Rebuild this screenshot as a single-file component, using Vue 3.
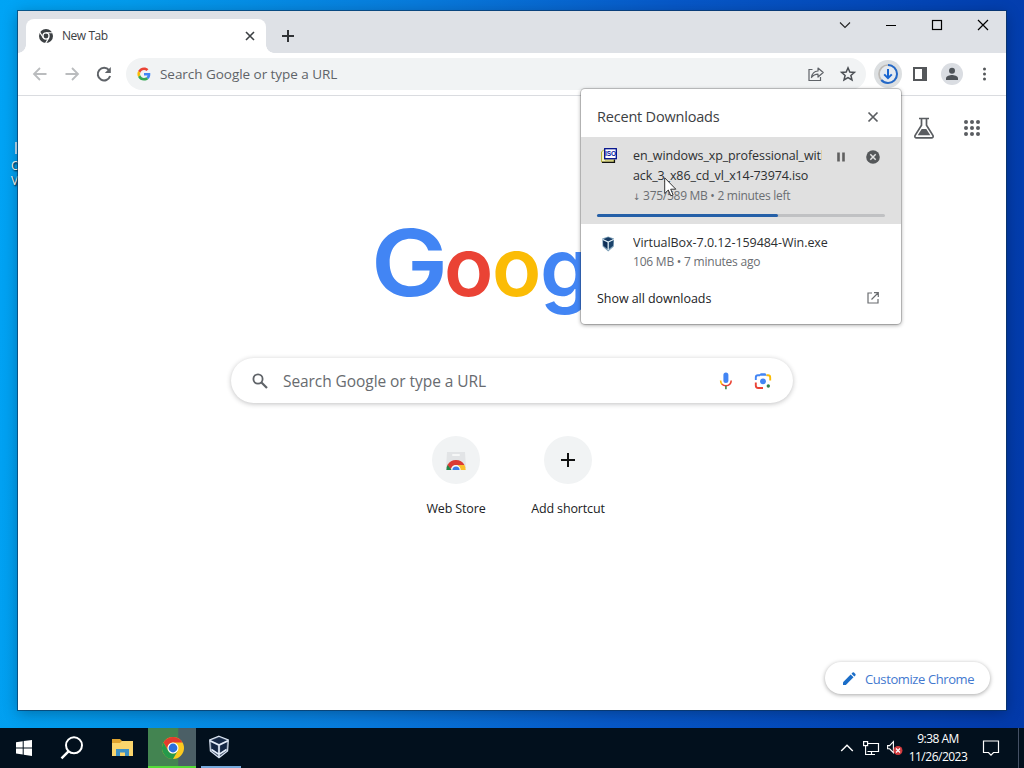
<template>
  <div class="desktop">
    <div class="wallpaper">
      <div class="desktop-icon">
        <span class="icon-edge"></span>
        <span>O</span>
        <span>V</span>
      </div>

      <div class="window">
        <!-- Tab strip -->
        <header class="titlebar">
          <div class="tab">
            <svg class="tab-favicon" width="16" height="16" viewBox="0 0 16 16">
              <circle cx="8" cy="8" r="7" fill="#3c4043" />
              <circle cx="8" cy="8" r="3.7" fill="#fff" />
              <circle cx="8" cy="8" r="2.4" fill="#3c4043" />
              <path d="M8 4.7H15M5.2 9.7L1.6 3.9M10.9 9.6L7.4 15.6" stroke="#fff" stroke-width="1.1" />
            </svg>
            <span class="tab-title">New Tab</span>
            <svg class="tab-close" width="16" height="16" viewBox="0 0 16 16">
              <path d="M4 4L12 12M12 4L4 12" stroke="#3c4043" stroke-width="1.6" />
            </svg>
          </div>
          <svg class="new-tab" width="16" height="16" viewBox="0 0 16 16">
            <path d="M8 2V14M2 8H14" stroke="#303336" stroke-width="2" />
          </svg>
          <div class="caption-buttons">
            <svg width="46" height="28" viewBox="0 0 46 28"><path d="M18 11.5L23 16.5L28 11.5" fill="none" stroke="#222" stroke-width="1.1" /></svg>
            <svg width="46" height="28" viewBox="0 0 46 28"><path d="M18 14.5H28" stroke="#000" /></svg>
            <svg width="46" height="28" viewBox="0 0 46 28"><rect x="18.5" y="9.5" width="9" height="9" fill="none" stroke="#000" stroke-width="1.2" /></svg>
            <svg width="46" height="28" viewBox="0 0 46 28"><path d="M18 9L28 19M28 9L18 19" stroke="#000" stroke-width="1.2" /></svg>
          </div>
        </header>

        <!-- Toolbar -->
        <div class="toolbar">
          <svg class="tool" width="32" height="32" viewBox="0 0 32 32"><path d="M22.5 16H10.5M16 10L10 16L16 22" fill="none" stroke="#babcbe" stroke-width="1.8" /></svg>
          <svg class="tool" width="32" height="32" viewBox="0 0 32 32"><path d="M9.5 16H21.5M16 10L22 16L16 22" fill="none" stroke="#babcbe" stroke-width="1.8" /></svg>
          <svg class="tool" width="32" height="32" viewBox="0 0 32 32">
            <path d="M21 12.2A6.3 6.3 0 1 0 22.1 18" fill="none" stroke="#5f6368" stroke-width="2" />
            <path d="M22.8 9V15H16.8Z" fill="#5f6368" />
          </svg>
          <div class="omnibox">
            <svg width="14" height="14" viewBox="-1.5 -1.5 51 51">
              <path fill="#EA4335" d="M24 9.5c3.54 0 6.71 1.22 9.21 3.6l6.85-6.85C35.9 2.38 30.47 0 24 0 14.62 0 6.51 5.38 2.56 13.22l7.98 6.19C12.43 13.72 17.74 9.5 24 9.5z" />
              <path fill="#4285F4" d="M46.98 24.55c0-1.57-.15-3.09-.38-4.55H24v9.02h12.94c-.58 2.96-2.26 5.48-4.78 7.18l7.73 6c4.51-4.18 7.09-10.36 7.09-17.65z" />
              <path fill="#FBBC05" d="M10.53 28.59c-.48-1.45-.76-2.99-.76-4.59s.27-3.14.76-4.59l-7.98-6.19C.92 16.46 0 20.12 0 24c0 3.88.92 7.54 2.56 10.78l7.97-6.19z" />
              <path fill="#34A853" d="M24 48c6.48 0 11.93-2.13 15.89-5.81l-7.73-6c-2.15 1.45-4.92 2.3-8.16 2.3-6.26 0-11.57-4.22-13.47-9.91l-7.98 6.19C6.51 42.62 14.62 48 24 48z" />
            </svg>
            <span class="omnibox-text">Search Google or type a URL</span>
            <svg width="32" height="32" viewBox="0 0 32 32">
              <path d="M12.5 11.5H9V22.5H20.5V19" fill="none" stroke="#5f6368" stroke-width="1.2" />
              <path d="M11.5 19.5C12 15.5 14.3 13.2 18 13V10L23.2 14.5L18 19V16.2C15.3 16.2 13.2 17.2 11.5 19.5Z" fill="none" stroke="#5f6368" stroke-width="1.2" stroke-linejoin="round" />
            </svg>
            <svg width="32" height="32" viewBox="0 0 32 32">
              <path d="M16 9.8L17.8 14L22.4 14.4L18.9 17.4L20 21.9L16 19.5L12 21.9L13.1 17.4L9.6 14.4L14.2 14Z" fill="none" stroke="#4b4f54" stroke-width="1.5" />
            </svg>
          </div>
          <svg class="tool" width="32" height="32" viewBox="0 0 32 32">
            <circle cx="16" cy="16" r="14" fill="#dcdfe1" />
            <circle cx="16" cy="16" r="9" fill="#e5eaf0" stroke="#bcb9b5" stroke-width="1.7" />
            <circle cx="16" cy="16" r="9" fill="none" stroke="#2368c8" stroke-width="2" stroke-dasharray="35.6 60" transform="rotate(-90 16 16)" />
            <path d="M16 11V20M12.2 16.4L16 20.2L19.8 16.4" fill="none" stroke="#1a66d0" stroke-width="2" />
          </svg>
          <svg class="tool" width="32" height="32" viewBox="0 0 32 32">
            <rect x="10" y="10" width="12" height="12" fill="none" stroke="#54575a" stroke-width="2" />
            <rect x="18" y="10" width="4" height="12" fill="#54575a" />
          </svg>
          <svg class="tool" width="32" height="32" viewBox="0 0 32 32">
            <circle cx="16" cy="16" r="11" fill="#dadde2" />
            <circle cx="16" cy="12.8" r="3" fill="#4e5358" />
            <path d="M10 22V20.3C10 17.8 14 17 16 17S22 17.8 22 20.3V22Z" fill="#4e5358" />
          </svg>
          <svg class="tool" width="32" height="32" viewBox="0 0 32 32">
            <circle v-for="y in [11, 16, 21]" :key="y" cx="16.5" :cy="y" r="1.5" fill="#54575a" />
          </svg>
        </div>

        <!-- New tab page -->
        <main class="page">
          <div class="page-links">
            <svg width="24" height="24" viewBox="0 0 24 24">
              <path d="M7 2.5H17M9.5 3V9.3L3 19.5C2.5 21 3.2 21.8 4.5 21.8H19.5C20.8 21.8 21.5 21 21 19.5L14.5 9.3V3" fill="none" stroke="#5a5d61" stroke-width="1.7" />
              <path d="M9.7 13H14.3L18.3 19.3H5.7Z" fill="#5a5d61" />
            </svg>
            <svg width="24" height="24" viewBox="0 0 24 24">
              <circle v-for="n in 9" :key="n" :cx="6 + ((n - 1) % 3) * 6" :cy="6 + Math.floor((n - 1) / 3) * 6" r="2" fill="#5a5d61" />
            </svg>
          </div>

          <svg class="logo" width="272" height="92" viewBox="0 0 272 92">
            <text v-for="(l, i) in logo" :key="i" class="logo-letter" :fill="l.color" :font-size="l.size" :transform="`translate(${l.x} ${l.y}) scale(${l.sx} 1)`">{{ l.ch }}</text>
          </svg>

          <div class="searchbox">
            <svg width="16" height="16" viewBox="0 0 16 16">
              <circle cx="6" cy="6" r="4.6" fill="none" stroke="#5f6368" stroke-width="1.8" />
              <path d="M9.5 9.5L15 15" stroke="#5f6368" stroke-width="2.2" />
            </svg>
            <span class="searchbox-text">Search Google or type a URL</span>
            <svg class="mic" width="20" height="20" viewBox="0 0 20 20">
              <rect x="7.4" y="1.5" width="5" height="10.5" rx="2.5" fill="#4285f4" />
              <path d="M4.6 9.5C4.6 11.3 5.2 12.5 6.2 13.5" fill="none" stroke="#fbbc04" stroke-width="1.6" />
              <path d="M6 13.3C8 15.3 12 15.3 13.8 13.3C14.7 12.3 15.2 11 15.2 9.5" fill="none" stroke="#ea4335" stroke-width="1.6" />
              <path d="M9.9 14.8V18.3" stroke="#4d8b50" stroke-width="1.7" />
            </svg>
            <svg width="20" height="20" viewBox="0 0 20 20">
              <path d="M2.8 9V6.5Q2.8 4.2 5 4.2H7" fill="none" stroke="#4285f4" stroke-width="1.9" />
              <path d="M6 4.8L7.6 2.2H12.4L14 4.8Z" fill="#4285f4" />
              <path d="M13.5 4.2H15Q17.2 4.2 17.2 6.5V9.5" fill="none" stroke="#fbbc04" stroke-width="1.9" />
              <path d="M2.8 11.5V14.5Q2.8 17 5.2 17H10" fill="none" stroke="#ea4335" stroke-width="1.9" />
              <circle cx="10" cy="10.3" r="2.9" fill="#4285f4" />
              <circle cx="15.3" cy="15" r="1.7" fill="#34804a" />
            </svg>
          </div>

          <div class="shortcuts">
            <div class="shortcut">
              <div class="shortcut-icon">
                <svg width="24" height="24" viewBox="0 0 24 24">
                  <path d="M3 4H21L22 20H2Z" fill="#e2e4e6" />
                  <rect x="8" y="6" width="8" height="2" rx="1" fill="#f6f7f7" />
                  <path d="M2.3 22A9.7 9.7 0 0 1 3.8 16.5L8 22Z" fill="#24864a" />
                  <path d="M3.5 17A9.8 9.8 0 0 1 20.5 17H12A5 5 0 0 0 7 21Z" fill="#db3b34" />
                  <path d="M12 17H20.5A9.7 9.7 0 0 1 21.7 22H16A5 5 0 0 0 12 17Z" fill="#fbc02d" />
                  <path d="M7.3 22A4.7 4.7 0 0 1 16.7 22Z" fill="#fff" />
                  <path d="M8.4 22A3.6 3.6 0 0 1 15.6 22Z" fill="#3b7de8" />
                </svg>
              </div>
              <span>Web Store</span>
            </div>
            <div class="shortcut">
              <div class="shortcut-icon">
                <svg width="24" height="24" viewBox="0 0 24 24"><path d="M12 5V19M5 12H19" stroke="#111" stroke-width="2" /></svg>
              </div>
              <span>Add shortcut</span>
            </div>
          </div>

          <button class="customize">
            <svg width="16" height="16" viewBox="0 0 16 16">
              <path d="M2 11.2L9.7 3.5L12.5 6.3L4.8 14H2Z" fill="#1a6dc8" />
              <path d="M10.5 2.7L11.6 1.6Q12.3 1 13 1.6L14.4 3Q15 3.7 14.4 4.4L13.3 5.5Z" fill="#1a6dc8" />
            </svg>
            <span>Customize Chrome</span>
          </button>
        </main>

        <!-- Download bubble -->
        <section class="downloads">
          <div class="downloads-header">
            <span class="downloads-title">Recent Downloads</span>
            <svg width="16" height="16" viewBox="0 0 16 16"><path d="M3.5 3.5L12.5 12.5M12.5 3.5L3.5 12.5" stroke="#5a5d61" stroke-width="1.7" /></svg>
          </div>

          <div class="download active">
            <div class="download-row">
              <svg class="file-icon iso-file" width="18" height="16" viewBox="0 0 18 16">
                <path d="M1.5 14V4L3.5 2H5V12H14V14Z" fill="#f3f0c4" stroke="#b5b13a" />
                <path d="M2 14.3H14.5V11.5" fill="none" stroke="#111" stroke-width="1.2" />
                <rect x="4.7" y="0.7" width="11.6" height="10" fill="#fff" stroke="#00108c" stroke-width="1.3" />
                <text x="10.5" y="8" class="iso-label">ISO</text>
              </svg>
              <div class="download-info">
                <div class="file-name iso-first">en_windows_xp_professional_with</div>
                <div class="file-name iso-second">ack_3_x86_cd_vl_x14-73974.iso</div>
                <div class="file-status"><span class="down">↓</span> 375/589 MB • 2 minutes left</div>
              </div>
              <svg class="pause" width="16" height="16" viewBox="0 0 16 16"><path d="M5.5 3.5V12.5M10.5 3.5V12.5" stroke="#606060" stroke-width="2.6" /></svg>
              <svg class="cancel" width="16" height="16" viewBox="0 0 16 16">
                <circle cx="8" cy="8" r="6.8" fill="#55585a" />
                <path d="M5.3 5.3L10.7 10.7M10.7 5.3L5.3 10.7" stroke="#e3e3e3" stroke-width="1.5" />
              </svg>
            </div>
            <div class="progress"><div class="progress-fill" :style="{ width: progress + '%' }"></div></div>
          </div>

          <div class="download">
            <div class="download-row">
              <svg class="file-icon vbox-file" width="16" height="16" viewBox="0 0 16 16">
                <path d="M7.2 0.5L13 2.6L12.8 10.5L7.2 15.5L1.6 10.5L1.2 2.6Z" fill="#7d9fb7" />
                <path d="M7.2 1.2L12 3.2L7.2 5.6L2.3 3.2Z" fill="#173c64" />
                <path d="M2 4.2L6.6 6.5V13L2.3 9.8Z" fill="#0e2f57" />
                <path d="M12.4 4.2L7.8 6.5V13L12.1 9.8Z" fill="#1c436b" />
                <path d="M7.2 5.8V14M1.6 3.4L7.2 6L12.8 3.4" stroke="#e2eef5" fill="none" />
              </svg>
              <div class="download-info">
                <div class="file-name exe">VirtualBox-7.0.12-159484-Win.exe</div>
                <div class="file-status ago">106 MB • 7 minutes ago</div>
              </div>
            </div>
          </div>

          <div class="show-all">
            <span>Show all downloads</span>
            <svg width="16" height="16" viewBox="0 0 16 16">
              <path d="M7 3H3V13H13V9M9 2.7H13.3V7M13 3L6.5 9.5" fill="none" stroke="#6a6d70" stroke-width="1.2" />
            </svg>
          </div>

          <svg class="cursor" width="13" height="20" viewBox="0 0 13 20">
            <path d="M0.7 0.8V16.5L4.3 13L6.8 18.8L9.1 17.8L6.7 12.2H11.8Z" fill="#fff" stroke="#222" stroke-width="0.9" />
          </svg>
        </section>
      </div>
    </div>

    <!-- Taskbar -->
    <footer class="taskbar">
      <div class="task">
        <svg width="18" height="18" viewBox="0 0 18 18"><path d="M1 3.3L7.7 2.3V8.4H1ZM8.7 2.1L17 1V8.4H8.7ZM1 9.4H7.7V15.6L1 14.6ZM8.7 9.4H17V17L8.7 15.8Z" fill="#fff" /></svg>
      </div>
      <div class="task">
        <svg width="24" height="24" viewBox="0 0 24 24">
          <circle cx="14" cy="9.3" r="8" fill="none" stroke="#fff" stroke-width="2" />
          <path d="M8.5 15.3L1.5 22.3" stroke="#fff" stroke-width="2.4" />
        </svg>
      </div>
      <div class="task explorer">
        <svg width="24" height="20" viewBox="0 0 24 20">
          <path d="M1 1H9L11 3H22V18H1Z" fill="#dfa32f" />
          <path d="M1 5H9L11 3H22V18H1Z" fill="#fbd56c" />
          <path d="M5 18V11H18V18H14V14.5H9V18Z" fill="#3e91c5" />
        </svg>
      </div>
      <div class="task chrome">
        <svg width="24" height="24" viewBox="0 0 24 24">
          <circle cx="12" cy="12" r="11" fill="#fbc91f" />
          <path d="M2.47 6.5A11 11 0 0 1 21.53 6.5H12A5.5 5.5 0 0 0 7.2 14.7Z" fill="#e33b2e" />
          <path d="M2.47 6.5L7.2 14.7A5.5 5.5 0 0 0 16.8 14.8L12 23A11 11 0 0 1 2.47 6.5Z" fill="#25994b" />
          <circle cx="12" cy="12" r="5.5" fill="#fff" />
          <circle cx="12" cy="12" r="4.4" fill="#2c70dd" />
        </svg>
      </div>
      <div class="task vbox">
        <svg width="22" height="24" viewBox="0 0 22 24">
          <path d="M11 1.2L20.3 5L19.6 16L11 22.8L2.4 16L1.7 5Z" fill="#46566c" stroke="#dbe5f4" stroke-width="1.2" />
          <path d="M11 2.5L18.5 5.5L11 9L3.5 5.5Z" fill="#142744" />
          <path d="M3.1 7.3L9.7 10.5V18L3.8 13.8ZM18.9 7.3L12.3 10.5V18L18.2 13.8Z" fill="#142744" />
          <path d="M2 5.7L11 10L20 5.7M11 10V22M3.4 14.5L11 19.4L18.6 14.5" fill="none" stroke="#e4edfa" stroke-width="1.6" />
        </svg>
      </div>

      <div class="tray">
        <svg width="14" height="16" viewBox="0 0 14 16"><path d="M1.2 11L7 5.2L12.8 11" fill="none" stroke="#fff" stroke-width="1.4" /></svg>
        <svg class="network" width="18" height="16" viewBox="0 0 18 16">
          <path d="M5 3.5H16.5V11.5H5.5M9.5 11.5V14.5M6 14.5H13" fill="none" stroke="#fff" stroke-width="1.2" />
          <rect x="1.6" y="1.6" width="4" height="4" fill="#02101d" stroke="#fff" stroke-width="1.2" />
          <path d="M3.6 5.5V14.5H7" fill="none" stroke="#fff" stroke-width="1.1" />
        </svg>
        <svg class="volume" width="18" height="18" viewBox="0 0 18 18">
          <path d="M1.6 6.6H3.6L7.4 2.6V13.6L3.6 9.8H1.6Z" fill="none" stroke="#fff" stroke-width="1.1" />
          <circle cx="12" cy="11.5" r="4.5" fill="#d13a3d" />
          <path d="M10 9.5L14 13.5M14 9.5L10 13.5" stroke="#fff" stroke-width="1.2" />
        </svg>
        <div class="clock">
          <span class="time">9:38 AM</span>
          <span class="date">11/26/2023</span>
        </div>
        <svg class="notify" width="18" height="18" viewBox="0 0 18 18"><path d="M1.5 2H16.5V13.5H11.5L9 16.2L6.5 13.5H1.5Z" fill="none" stroke="#fff" stroke-width="1.2" /></svg>
        <span class="peek"></span>
      </div>
    </footer>
  </div>
</template>

<script setup>
import { ref } from 'vue'

const progress = ref(62.8)

const logo = [
  { ch: 'G', color: '#4285f4', size: 92, x: -5, y: 68, sx: 1.12 },
  { ch: 'o', color: '#ea4335', size: 81, x: 68, y: 68, sx: 1 },
  { ch: 'o', color: '#fbbc05', size: 81, x: 116, y: 68, sx: 1 },
  { ch: 'g', color: '#4285f4', size: 82, x: 164, y: 69, sx: 1 }
]
</script>

<style>
body {
  margin: 0;
  overflow: hidden;
}
</style>

<style scoped>
.desktop {
  display: flex;
  flex-direction: column;
  width: 1024px;
  height: 768px;
  overflow: hidden;
  font-family: "Open Sans", "Noto Sans", sans-serif;
  font-size: 12.5px;
  color: #202124;
}

svg {
  display: block;
  flex: none;
}

span,
.file-name,
.file-status {
  white-space: nowrap;
}

.wallpaper {
  position: relative;
  flex: 1;
  display: flex;
  box-sizing: border-box;
  padding: 11px 18px 18px;
  background: linear-gradient(95deg, #00a4f5 0%, #039bec 12%, #087bdc 38%, #0758c8 62%, #0345b6 85%, #0339a9 100%);
}

.desktop-icon {
  position: absolute;
  left: 11px;
  top: 114px;
  display: flex;
  flex-direction: column;
  width: 12px;
  font-size: 12px;
  line-height: 15px;
  color: #fff;
  text-shadow: 1px 1px 2px #000;
}

.icon-edge {
  width: 2px;
  height: 12px;
  margin: 28px 0 4px 4px;
  background: #b9dcf2;
}

.window {
  position: relative;
  flex: 1;
  display: flex;
  flex-direction: column;
  background: #fff;
  box-shadow: 0 0 0 1px rgba(10, 50, 90, 0.65), 0 3px 14px rgba(0, 0, 0, 0.3);
}

/* Tab strip */
.titlebar {
  display: flex;
  height: 42px;
  background: #dee1e6;
}

.tab {
  position: relative;
  display: flex;
  align-items: center;
  box-sizing: border-box;
  width: 240px;
  height: 34px;
  margin: 8px 0 0 8px;
  padding: 0 8px 0 12px;
  border-radius: 8px 8px 0 0;
  background: #fff;
}

.tab::before,
.tab::after {
  content: "";
  position: absolute;
  bottom: 0;
  width: 8px;
  height: 8px;
}

.tab::before {
  left: -8px;
  background: radial-gradient(circle at 0 0, transparent 7.5px, #fff 8px);
}

.tab::after {
  right: -8px;
  background: radial-gradient(circle at 100% 0, transparent 7.5px, #fff 8px);
}

.tab-title {
  flex: 1;
  margin: 0 0 2px 8px;
  font-size: 12px;
  letter-spacing: -0.45px;
  color: #3c4043;
}

.new-tab {
  margin: 17px 0 0 14px;
}

.caption-buttons {
  display: flex;
  margin-left: auto;
}

/* Toolbar */
.toolbar {
  display: flex;
  align-items: center;
  height: 42px;
  padding-left: 6px;
  border-bottom: 1px solid #dadce0;
}

.omnibox {
  display: flex;
  align-items: center;
  box-sizing: border-box;
  width: 740px;
  height: 32px;
  margin: 0 6px;
  padding: 0 2px 0 11px;
  border-radius: 16px;
  background: #f1f3f4;
}

.omnibox-text {
  flex: 1;
  margin-left: 9px;
  font-size: 13.5px;
  letter-spacing: -0.04px;
  color: #5f6368;
}

/* New tab page */
.page {
  flex: 1;
  display: flex;
  flex-direction: column;
  align-items: center;
}

.page-links {
  align-self: flex-end;
  display: flex;
  gap: 24px;
  margin: 20px 22px 0 0;
}

.logo {
  margin-top: 88px;
  overflow: visible;
}

.logo-letter {
  font-family: Inter, sans-serif;
  font-weight: 600;
}

.searchbox {
  display: flex;
  align-items: center;
  box-sizing: border-box;
  width: 562px;
  height: 45px;
  margin-top: 38px;
  padding: 0 20px 0 21px;
  border-radius: 23px;
  box-shadow: 0 1px 5px rgba(32, 33, 36, 0.28);
}

.searchbox-text {
  flex: 1;
  margin-left: 15px;
  font-size: 15.5px;
  letter-spacing: -0.07px;
  color: #686b6f;
}

.mic {
  margin-right: 17px;
}

.shortcuts {
  display: flex;
  margin-top: 33px;
}

.shortcut {
  display: flex;
  flex-direction: column;
  align-items: center;
  gap: 16px;
  width: 112px;
  line-height: 18px;
  letter-spacing: -0.15px;
}

.shortcut-icon {
  display: flex;
  align-items: center;
  justify-content: center;
  width: 48px;
  height: 48px;
  border-radius: 50%;
  background: #f1f3f4;
}

.customize {
  align-self: flex-end;
  display: flex;
  align-items: center;
  gap: 8px;
  box-sizing: border-box;
  width: 165px;
  height: 32px;
  margin: auto 16px 16px 0;
  padding: 1px 0 0 16px;
  border: 0;
  border-radius: 16px;
  background: #fff;
  box-shadow: 0 1px 4px rgba(0, 0, 0, 0.35);
  font: 13px "Open Sans", "Noto Sans", sans-serif;
  letter-spacing: -0.4px;
  color: #4379cf;
}

/* Download bubble */
.downloads {
  position: absolute;
  left: 563px;
  top: 78px;
  width: 320px;
  height: 235px;
  border-radius: 4px;
  background: #fff;
  box-shadow: 0 0 0 1px rgba(0, 0, 0, 0.16), 0 1px 4px rgba(0, 0, 0, 0.4);
}

.downloads-header {
  display: flex;
  align-items: center;
  justify-content: space-between;
  height: 48px;
  padding: 8px 20px 0 16px;
  box-sizing: border-box;
}

.downloads-title {
  margin-bottom: 2px;
  font-size: 14.5px;
  letter-spacing: -0.2px;
  color: #3c4043;
}

.download {
  height: 62px;
  padding: 9px 16px 0;
  box-sizing: border-box;
}

.download.active {
  height: 87px;
  background: #e0e0e0;
}

.download-row {
  display: flex;
  align-items: flex-start;
}

.file-icon {
  margin: 2px 0 0 4px;
}

.iso-file {
  margin-left: 3px;
  margin-right: 1px;
}

.vbox-file {
  margin-top: 3px;
}

.iso-label {
  font-family: "Liberation Sans", sans-serif;
  font-size: 6.5px;
  font-weight: 700;
  text-anchor: middle;
  fill: #0014a0;
}

.download-info {
  width: 189px;
  margin-left: 14px;
  overflow: hidden;
}

.download:not(.active) .download-info {
  width: 220px;
  margin-left: 16px;
}

.file-name {
  line-height: 20px;
  letter-spacing: -0.05px;
  color: #2d2f31;
}

.iso-first {
  letter-spacing: -0.11px;
}

.iso-second {
  letter-spacing: -0.11px;
}

.file-status {
  line-height: 19px;
  font-size: 12px;
  letter-spacing: -0.28px;
  color: #6b6e72;
}

.ago {
  line-height: 18px;
  letter-spacing: -0.22px;
}

.down {
  font-family: "DejaVu Sans", sans-serif;
  font-size: 9px;
}

.pause {
  margin: 3px 0 0 11px;
}

.cancel {
  margin: 3px 0 0 16px;
}

.progress {
  height: 3px;
  margin-top: 8px;
  transform: translateY(-1px);
  border-radius: 2px;
  background: #c0c1c3;
}

.progress-fill {
  height: 100%;
  border-radius: 2px;
  background: #2560a8;
}

.show-all {
  display: flex;
  align-items: center;
  justify-content: space-between;
  height: 24px;
  padding: 0 20px 0 16px;
  letter-spacing: -0.05px;
}

.cursor {
  position: absolute;
  left: 83px;
  top: 88px;
}

/* Taskbar */
.taskbar {
  display: flex;
  height: 40px;
  background: #02101d;
}

.task {
  display: flex;
  align-items: center;
  justify-content: center;
  box-sizing: border-box;
  width: 48px;
  height: 40px;
}

.explorer {
  width: 52px;
  padding-left: 2px;
}

.chrome {
  border-bottom: 2px solid #54dc38;
  background: linear-gradient(90deg, #438451 62%, #4b5f66 64%);
}

.chrome svg {
  margin: 2px 0 0 2px;
}

.vbox {
  width: 40px;
  margin-left: 5px;
  padding-right: 4px;
  border-bottom: 2px solid #76a9dc;
}

.tray {
  display: flex;
  align-items: center;
  margin-left: auto;
}

.network {
  margin-left: 8px;
}

.volume {
  margin-left: 6px;
}

.clock {
  display: flex;
  flex-direction: column;
  align-items: center;
  width: 60px;
  margin-left: 4px;
  font-size: 12px;
  line-height: 18px;
  letter-spacing: -0.5px;
  color: #fff;
}

.notify {
  margin-left: 14px;
}

.peek {
  width: 1px;
  height: 40px;
  margin: 0 5px 0 18px;
  background: #445064;
}
</style>
